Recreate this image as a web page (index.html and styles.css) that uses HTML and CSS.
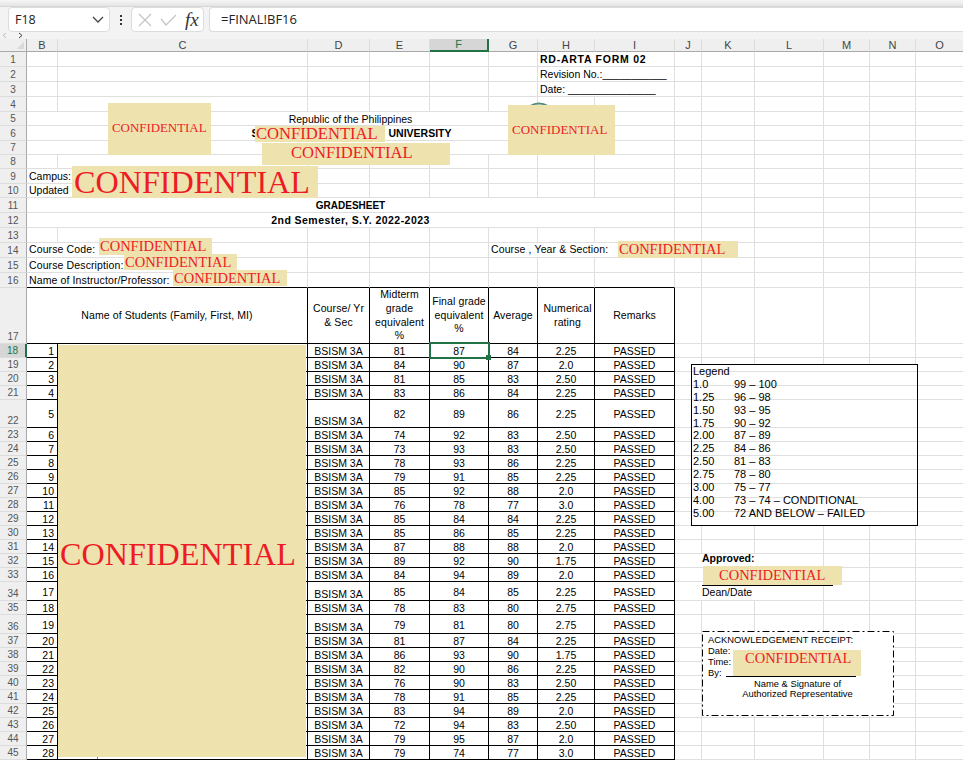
FILE: index.html
```html
<!DOCTYPE html>
<html lang="en">
<head>
    <meta charset="UTF-8">
    <meta name="viewport" content="width=device-width, initial-scale=1.0">
    <title>Gradesheet</title>
    <link rel="stylesheet" href="styles.css">
</head>
<body>
    <div class="toolbar">
        <div class="top-strip"></div>
        <div class="formula-bar">
            <div class="name-box">
                <span>F18</span>
                <svg width="12" height="7" viewBox="0 0 12 7"><path d="M1 1l5 5 5-5" fill="none" stroke="#444" stroke-width="1.3"/></svg>
            </div>
            <div class="bar-dots"><i></i><i></i><i></i></div>
            <div class="fx-box">
                <svg width="14" height="14" viewBox="0 0 14 14"><path d="M1 1l12 12M13 1L1 13" fill="none" stroke="#c4c4c4" stroke-width="1.2"/></svg>
                <svg width="17" height="12" viewBox="0 0 17 12"><path d="M1 5l5 6L16 1" fill="none" stroke="#c4c4c4" stroke-width="1.2"/></svg>
                <span class="fx">fx</span>
            </div>
            <div class="formula-input">=FINAL!BF16</div>
        </div>
        <div class="scroll-arrows">
            <svg width="24" height="7" viewBox="0 0 24 7"><path d="M6 1L3 3.5 6 6" fill="none" stroke="#bbb"/><path d="M19 1l3 2.500L19 6" fill="none" stroke="#444"/></svg>
        </div>
    </div>

    <div class="sheet">
        <table class="grid">
            <colgroup>
                <col class="c-head"><col class="c-b"><col class="c-c"><col class="c-d"><col class="c-e"><col class="c-f"><col class="c-g"><col class="c-h"><col class="c-i"><col class="c-j"><col class="c-k"><col class="c-l"><col class="c-m"><col class="c-n"><col class="c-o">
            </colgroup>
            <tr class="h13 col-heads"><th class="corner"></th><th>B</th><th>C</th><th>D</th><th>E</th><th class="active">F</th><th>G</th><th>H</th><th>I</th><th>J</th><th>K</th><th>L</th><th>M</th><th>N</th><th>O</th></tr>

            <tr class="h15"><th>1</th><td></td><td></td><td></td><td></td><td></td><td></td><td colspan="2" class="form-no">RD-ARTA FORM 02</td><td></td><td></td><td></td><td></td><td></td><td></td></tr>
            <tr class="h15"><th>2</th><td></td><td></td><td></td><td></td><td></td><td></td><td colspan="2">Revision No.:___________</td><td></td><td></td><td></td><td></td><td></td><td></td></tr>
            <tr class="h15"><th>3</th><td></td><td></td><td></td><td></td><td></td><td></td><td colspan="2">Date: _______________</td><td></td><td></td><td></td><td></td><td></td><td></td></tr>
            <tr class="h15"><th>4</th><td></td><td></td><td></td><td></td><td></td><td></td><td></td><td></td><td></td><td></td><td></td><td></td><td></td><td></td></tr>
            <tr class="h14"><th>5</th><td colspan="8" class="center republic">Republic of the Philippines</td><td></td><td></td><td></td><td></td><td></td><td></td></tr>
            <tr class="h15"><th>6</th><td colspan="8" class="center bold school">S<span class="school-gap"></span>UNIVERSITY</td><td></td><td></td><td></td><td></td><td></td><td></td></tr>
            <tr class="h14"><th>7</th><td colspan="8"></td><td></td><td></td><td></td><td></td><td></td><td></td></tr>
            <tr class="h14"><th>8</th><td></td><td></td><td></td><td></td><td></td><td></td><td></td><td></td><td></td><td></td><td></td><td></td><td></td><td></td></tr>
            <tr class="h15"><th>9</th><td colspan="2">Campus:</td><td></td><td></td><td></td><td></td><td></td><td></td><td></td><td></td><td></td><td></td><td></td><td></td></tr>
            <tr class="h14"><th>10</th><td colspan="2">Updated</td><td></td><td></td><td></td><td></td><td></td><td></td><td></td><td></td><td></td><td></td><td></td><td></td></tr>
            <tr class="h15"><th>11</th><td colspan="8" class="center bold sheet-title">GRADESHEET</td><td></td><td></td><td></td><td></td><td></td><td></td></tr>
            <tr class="h15"><th>12</th><td colspan="8" class="center bold term">2nd Semester, S.Y. 2022-2023</td><td></td><td></td><td></td><td></td><td></td><td></td></tr>
            <tr class="h15"><th>13</th><td></td><td></td><td></td><td></td><td></td><td></td><td></td><td></td><td></td><td></td><td></td><td></td><td></td><td></td></tr>
            <tr class="h15 info info-top"><th>14</th><td colspan="2">Course Code:</td><td></td><td></td><td></td><td colspan="3">Course , Year &amp; Section:</td><td></td><td></td><td></td><td></td><td></td><td></td></tr>
            <tr class="h15 info"><th>15</th><td colspan="2">Course Description:</td><td></td><td></td><td></td><td></td><td></td><td></td><td></td><td></td><td></td><td></td><td></td><td></td></tr>
            <tr class="h15 info above-roster"><th>16</th><td colspan="2">Name of Instructor/Professor:</td><td></td><td></td><td></td><td></td><td></td><td></td><td></td><td></td><td></td><td></td><td></td><td></td></tr>

            <tr class="h56 roster-head"><th>17</th><td colspan="2">Name of Students (Family, First, MI)</td><td>Course/ Yr<br>&amp; Sec</td><td>Midterm<br>grade<br>equivalent<br>%</td><td>Final grade<br>equivalent<br>%</td><td>Average</td><td class="head-rating">Numerical<br>rating</td><td>Remarks</td><td></td><td></td><td></td><td></td><td></td><td></td></tr>

            <tr class="h14 roster"><th class="active">18</th><td>1</td><td></td><td>BSISM 3A</td><td>81</td><td class="selected">87</td><td>84</td><td>2.25</td><td>PASSED</td><td></td><td></td><td></td><td></td><td></td><td></td></tr>
            <tr class="h14 roster"><th>19</th><td>2</td><td></td><td>BSISM 3A</td><td>84</td><td>90</td><td>87</td><td>2.0</td><td>PASSED</td><td></td><td></td><td></td><td></td><td></td><td></td></tr>
            <tr class="h14 roster"><th>20</th><td>3</td><td></td><td>BSISM 3A</td><td>81</td><td>85</td><td>83</td><td>2.50</td><td>PASSED</td><td colspan="6"></td></tr>
            <tr class="h14 roster"><th>21</th><td>4</td><td></td><td>BSISM 3A</td><td>83</td><td>86</td><td>84</td><td>2.25</td><td>PASSED</td><td colspan="6"></td></tr>
            <tr class="h28 roster"><th>22</th><td>5</td><td></td><td>BSISM 3A</td><td>82</td><td>89</td><td>86</td><td>2.25</td><td>PASSED</td><td colspan="6"></td></tr>
            <tr class="h14 roster"><th>23</th><td>6</td><td></td><td>BSISM 3A</td><td>74</td><td>92</td><td>83</td><td>2.50</td><td>PASSED</td><td colspan="6"></td></tr>
            <tr class="h14 roster"><th>24</th><td>7</td><td></td><td>BSISM 3A</td><td>73</td><td>93</td><td>83</td><td>2.50</td><td>PASSED</td><td colspan="6"></td></tr>
            <tr class="h14 roster"><th>25</th><td>8</td><td></td><td>BSISM 3A</td><td>78</td><td>93</td><td>86</td><td>2.25</td><td>PASSED</td><td colspan="6"></td></tr>
            <tr class="h14 roster"><th>26</th><td>9</td><td></td><td>BSISM 3A</td><td>79</td><td>91</td><td>85</td><td>2.25</td><td>PASSED</td><td colspan="6"></td></tr>
            <tr class="h14 roster"><th>27</th><td>10</td><td></td><td>BSISM 3A</td><td>85</td><td>92</td><td>88</td><td>2.0</td><td>PASSED</td><td colspan="6"></td></tr>
            <tr class="h14 roster"><th>28</th><td>11</td><td></td><td>BSISM 3A</td><td>76</td><td>78</td><td>77</td><td>3.0</td><td>PASSED</td><td colspan="6"></td></tr>
            <tr class="h14 roster"><th>29</th><td>12</td><td></td><td>BSISM 3A</td><td>85</td><td>84</td><td>84</td><td>2.25</td><td>PASSED</td><td colspan="6"></td></tr>
            <tr class="h14 roster"><th>30</th><td>13</td><td></td><td>BSISM 3A</td><td>85</td><td>86</td><td>85</td><td>2.25</td><td>PASSED</td><td></td><td></td><td></td><td></td><td></td><td></td></tr>
            <tr class="h14 roster"><th>31</th><td>14</td><td></td><td>BSISM 3A</td><td>87</td><td>88</td><td>88</td><td>2.0</td><td>PASSED</td><td></td><td></td><td></td><td></td><td></td><td></td></tr>
            <tr class="h14 roster"><th>32</th><td>15</td><td></td><td>BSISM 3A</td><td>89</td><td>92</td><td>90</td><td>1.75</td><td>PASSED</td><td colspan="3" class="approved">Approved:</td><td></td><td></td><td></td></tr>
            <tr class="h14 roster"><th>33</th><td>16</td><td></td><td>BSISM 3A</td><td>84</td><td>94</td><td>89</td><td>2.0</td><td>PASSED</td><td colspan="3"></td><td></td><td></td><td></td></tr>
            <tr class="h19 roster"><th>34</th><td>17</td><td></td><td>BSISM 3A</td><td>85</td><td>84</td><td>85</td><td>2.25</td><td>PASSED</td><td colspan="3" class="dean">Dean/Date</td><td></td><td></td><td></td></tr>
            <tr class="h14 roster"><th>35</th><td>18</td><td></td><td>BSISM 3A</td><td>78</td><td>83</td><td>80</td><td>2.75</td><td>PASSED</td><td></td><td></td><td></td><td></td><td></td><td></td></tr>
            <tr class="h19 roster"><th>36</th><td>19</td><td></td><td>BSISM 3A</td><td>79</td><td>81</td><td>80</td><td>2.75</td><td>PASSED</td><td></td><td></td><td></td><td></td><td></td><td></td></tr>
            <tr class="h14 roster"><th>37</th><td>20</td><td></td><td>BSISM 3A</td><td>81</td><td>87</td><td>84</td><td>2.25</td><td>PASSED</td><td></td><td></td><td></td><td></td><td></td><td></td></tr>
            <tr class="h14 roster"><th>38</th><td>21</td><td></td><td>BSISM 3A</td><td>86</td><td>93</td><td>90</td><td>1.75</td><td>PASSED</td><td></td><td></td><td></td><td></td><td></td><td></td></tr>
            <tr class="h14 roster"><th>39</th><td>22</td><td></td><td>BSISM 3A</td><td>82</td><td>90</td><td>86</td><td>2.25</td><td>PASSED</td><td></td><td></td><td></td><td></td><td></td><td></td></tr>
            <tr class="h14 roster"><th>40</th><td>23</td><td></td><td>BSISM 3A</td><td>76</td><td>90</td><td>83</td><td>2.50</td><td>PASSED</td><td></td><td></td><td></td><td></td><td></td><td></td></tr>
            <tr class="h14 roster"><th>41</th><td>24</td><td></td><td>BSISM 3A</td><td>78</td><td>91</td><td>85</td><td>2.25</td><td>PASSED</td><td></td><td></td><td></td><td></td><td></td><td></td></tr>
            <tr class="h14 roster"><th>42</th><td>25</td><td></td><td>BSISM 3A</td><td>83</td><td>94</td><td>89</td><td>2.0</td><td>PASSED</td><td></td><td></td><td></td><td></td><td></td><td></td></tr>
            <tr class="h14 roster"><th>43</th><td>26</td><td></td><td>BSISM 3A</td><td>72</td><td>94</td><td>83</td><td>2.50</td><td>PASSED</td><td></td><td></td><td></td><td></td><td></td><td></td></tr>
            <tr class="h14 roster"><th>44</th><td>27</td><td></td><td>BSISM 3A</td><td>79</td><td>95</td><td>87</td><td>2.0</td><td>PASSED</td><td></td><td></td><td></td><td></td><td></td><td></td></tr>
            <tr class="h14 roster"><th>45</th><td>28</td><td></td><td>BSISM 3A</td><td>79</td><td>74</td><td>77</td><td>3.0</td><td>PASSED</td><td></td><td></td><td></td><td></td><td></td><td></td></tr>
        </table>

        <!-- things floating over the cells -->
        <svg class="logo-peek" width="20" height="4" viewBox="0 0 20 4"><path d="M1 4Q10 -1 19 4" fill="none" stroke="#4f8a7a" stroke-width="2"/></svg>

        <div class="mask mask-logo-left">CONFIDENTIAL</div>
        <div class="mask mask-logo-right">CONFIDENTIAL</div>
        <div class="mask mask-school">CONFIDENTIAL</div>
        <div class="mask mask-address">CONFIDENTIAL</div>
        <div class="mask mask-campus">CONFIDENTIAL</div>
        <div class="mask mask-code">CONFIDENTIAL</div>
        <div class="mask mask-desc">CONFIDENTIAL</div>
        <div class="mask mask-prof">CONFIDENTIAL</div>
        <div class="mask mask-section">CONFIDENTIAL</div>
        <div class="mask mask-names">CONFIDENTIAL</div>

        <div class="legend">
            <div class="legend-title">Legend</div>
            <span>1.0</span><span>99 – 100</span>
            <span>1.25</span><span>96 – 98</span>
            <span>1.50</span><span>93 – 95</span>
            <span>1.75</span><span>90 – 92</span>
            <span>2.00</span><span>87 – 89</span>
            <span>2.25</span><span>84 – 86</span>
            <span>2.50</span><span>81 – 83</span>
            <span>2.75</span><span>78 – 80</span>
            <span>3.00</span><span>75 – 77</span>
            <span>4.00</span><span>73 – 74 – CONDITIONAL</span>
            <span>5.00</span><span>72 AND BELOW – FAILED</span>
        </div>

        <div class="sign-line"></div>
        <div class="mask mask-dean">CONFIDENTIAL</div>

        <div class="receipt">
            <svg class="receipt-border" width="192" height="85"><rect x="0.5" y="0.5" width="191" height="84" fill="none" stroke="#000" stroke-dasharray="7 3 2 3"/></svg>
            <div class="receipt-head">ACKNOWLEDGEMENT RECEIPT:</div>
            <div>Date:</div>
            <div class="receipt-time">Time:</div>
            <div class="receipt-by">By: <span class="receipt-line"></span></div>
            <div class="receipt-name">Name &amp; Signature of<br>Authorized Representative</div>
            <div class="mask mask-receipt">CONFIDENTIAL</div>
        </div>
    </div>
</body>
</html>
```

FILE: styles.css
```css
* {
    box-sizing: border-box;
}
html, body {
    margin: 0;
    height: 760px;
    overflow: hidden;
    background: #fff;
}
body {
    font-family: "Liberation Sans", Arial, sans-serif;
    font-size: 10.5px;
    color: #000;
}

/* toolbar */
.toolbar {
    height: 39px;
    background: #f3f3f3;
}
.top-strip {
    height: 7px;
    background: linear-gradient(#f6f6f6, #e4e4e4);
    border-bottom: 1px solid #d6d6d6;
}
.formula-bar {
    display: flex;
    align-items: stretch;
    height: 25px;
    padding-left: 8px;
}
.name-box {
    width: 102px;
    background: #fff;
    border: 1px solid #dcdcdc;
    border-radius: 4px;
    display: flex;
    align-items: center;
    justify-content: space-between;
    padding: 0 5px 0 6px;
    font: 12.5px "Open Sans", sans-serif;
    color: #222;
}
.bar-dots {
    width: 21px;
    display: flex;
    flex-direction: column;
    align-items: center;
    justify-content: center;
    gap: 2px;
}
.bar-dots i {
    width: 2px;
    height: 2px;
    background: #333;
}
.fx-box {
    width: 73px;
    background: #fff;
    border: 1px solid #dcdcdc;
    border-radius: 4px;
    display: flex;
    align-items: center;
    gap: 8px;
    padding-left: 6px;
}
.fx {
    font: italic 19px "Liberation Serif", serif;
    color: #333;
    line-height: 20px;
}
.formula-input {
    flex: 1;
    margin-left: 5px;
    background: #fff;
    border: 1px solid #dcdcdc;
    border-right: none;
    border-radius: 4px 0 0 4px;
    padding-left: 11px;
    font: 13px/23px "Open Sans", sans-serif;
    color: #222;
}
.scroll-arrows {
    height: 7px;
}
.scroll-arrows svg {
    display: block;
}

/* sheet */
.sheet {
    position: relative;
    height: 721px;
    overflow: hidden;
}
.grid {
    table-layout: fixed;
    width: 964px;
    border-collapse: separate;
    border-spacing: 0;
}
.c-head { width: 27px; }
.c-b { width: 31px; }
.c-c { width: 250px; }
.c-d { width: 62px; }
.c-e { width: 60px; }
.c-f { width: 59px; }
.c-g { width: 49px; }
.c-h { width: 57px; }
.c-i { width: 80px; }
.c-j { width: 27px; }
.c-k { width: 53px; }
.c-l { width: 69px; }
.c-m { width: 46px; }
.c-n { width: 46px; }
.c-o { width: 48px; }

.h13 > * { height: 13px; }
.h14 > * { height: 14px; }
.h15 > * { height: 15px; }
.h19 > * { height: 19px; }
.h28 > * { height: 28px; }
.h56 > * { height: 56px; }

.grid td {
    padding: 0 2px;
    border-right: 1px solid #dfdfdf;
    border-bottom: 1px solid #dfdfdf;
    line-height: 13px;
    white-space: nowrap;
    overflow: visible;
    vertical-align: middle;
}
.grid th {
    padding: 0;
    background: #efefef;
    border-right: 1px solid #a9a9a9;
    border-bottom: 1px solid #dcdcdc;
    font-size: 10px;
    font-weight: normal;
    line-height: 13px;
    color: #555;
    text-align: center;
    vertical-align: bottom;
}
.grid .col-heads th {
    border-right: 1px solid #dcdcdc;
    border-bottom: 1px solid #a9a9a9;
    font-size: 11px;
    line-height: 11px;
    color: #444;
    vertical-align: middle;
}
.grid .col-heads th.corner {
    border-right: 1px solid #a9a9a9;
    background: #efefef linear-gradient(135deg, transparent 50%, #dadada 50%) no-repeat right 2px bottom 2px / 7px 7px;
}
.grid .col-heads th.active {
    background: #d6d6d6;
    border-bottom: 2px solid #217346;
    color: #217346;
}
.grid th.active {
    background: #d6d6d6;
    border-right: 2px solid #217346;
    color: #217346;
}

.center {
    text-align: center;
}
.bold {
    font-weight: bold;
}
.grid .republic {
    padding-top: 1px;
    line-height: 12px;
}
.grid .school {
    padding-left: 4px;
}
.school-gap {
    display: inline-block;
    width: 130px;
}
.sheet-title {
    font-size: 10px;
}
.term {
    letter-spacing: 0.45px;
}
.form-no {
    font-weight: bold;
    letter-spacing: 0.75px;
}
.info {
    letter-spacing: 0.12px;
}
.info-top td {
    vertical-align: top;
}

/* student table */
.above-roster td:nth-child(n+2):nth-child(-n+8) {
    border-bottom-color: #000;
}
.roster-head td {
    line-height: 13.75px;
    padding: 0;
    text-align: center;
    letter-spacing: 0.1px;
}
.roster-head td:nth-child(-n+8) {
    border-right-color: #000;
    border-bottom-color: #000;
}
.grid .head-rating {
    padding-left: 3px;
}
.roster td:nth-child(-n+9) {
    border-right-color: #000;
    border-bottom-color: #000;
    text-align: center;
}
.roster td, .grid .roster th {
    line-height: 12px;
    padding-top: 1px;
}
.roster td:nth-child(2) {
    text-align: right;
    padding-right: 3px;
}
.roster td:nth-child(4) {
    vertical-align: bottom;
}
.selected {
    position: relative;
}
.selected::after {
    content: "";
    position: absolute;
    left: -1px;
    top: -2px;
    width: 61px;
    height: 17px;
    box-sizing: border-box;
    border: 2px solid #217346;
}
.selected::before {
    content: "";
    position: absolute;
    left: 56px;
    top: 11px;
    width: 5px;
    height: 5px;
    background: #217346;
    z-index: 1;
}

/* redaction boxes */
.mask {
    position: absolute;
    display: flex;
    align-items: center;
    background: #eee2af;
    color: #ed1c24;
    font-family: "Liberation Serif", serif;
    font-size: 14.5px;
    line-height: 1;
    white-space: nowrap;
}
.mask-logo-left { left: 108px; top: 64px; width: 103px; height: 52px; padding: 0 0 2px 4px; font-size: 12.9px; }
.mask-logo-right { left: 508px; top: 66px; width: 107px; height: 50px; padding: 0 0 2px 4px; font-size: 13px; }
.mask-school { left: 255px; top: 87px; width: 130px; height: 16px; padding-left: 1px; font-size: 16.6px; }
.mask-address { left: 262px; top: 104px; width: 188px; height: 22px; padding: 0 0 1px 29px; font-size: 16.6px; }
.mask-campus { left: 72px; top: 127px; width: 246px; height: 32px; padding-left: 2px; font-size: 32.2px; }
.mask-code { left: 99px; top: 199px; width: 113px; height: 17px; padding-left: 1px; }
.mask-desc { left: 124px; top: 215px; width: 113px; height: 16px; padding-left: 1px; }
.mask-prof { left: 173px; top: 231px; width: 114px; height: 16px; padding-left: 1px; }
.mask-section { left: 618px; top: 202px; width: 120px; height: 17px; padding-left: 1px; }
.mask-names { left: 58px; top: 306px; width: 248px; height: 412px; padding: 6px 0 0 2px; font-size: 32.2px; }
.mask-names::after {
    content: "";
    position: absolute;
    left: 39px;
    top: 412px;
    width: 1px;
    height: 2px;
    background: #888;
}
.mask-dean { left: 703px; top: 527px; width: 139px; height: 19px; padding-left: 16px; }
.mask-receipt { left: 31px; top: 19px; width: 128px; height: 26px; padding: 0 0 9px 12px; }

.logo-peek {
    position: absolute;
    left: 529px;
    top: 63px;
}

/* legend */
.legend {
    position: absolute;
    left: 691px;
    top: 325px;
    width: 227px;
    height: 162px;
    border: 1px solid #000;
    /* covers the cell lines of row 19 */
    background: linear-gradient(#fff 6px, transparent 6px);
    padding: 0 0 0 1px;
    display: grid;
    grid-template-columns: 41px 1fr;
    grid-auto-rows: 12.9px;
    font-size: 11px;
    line-height: 12.9px;
}
.legend-title {
    grid-column: 1 / 3;
}

/* approval */
.grid .approved {
    font-weight: bold;
    padding: 0 0 0 27px;
    text-align: left;
    vertical-align: top;
    line-height: 9px;
}
.grid .dean {
    padding-left: 27px;
    text-align: left;
}
.sign-line {
    position: absolute;
    left: 702px;
    top: 546px;
    width: 131px;
    height: 1px;
    background: #000;
    z-index: 1;
}

/* receipt */
.receipt {
    position: absolute;
    left: 702px;
    top: 592px;
    width: 192px;
    height: 85px;
    background: #fff;
    padding: 3px 0 0 6px;
    font-size: 9.4px;
    line-height: 11px;
}
.receipt-border {
    position: absolute;
    left: 0;
    top: 0;
}
.receipt-head {
    height: 10px;
    margin-top: 1px;
    line-height: 10px;
}
.receipt-by {
    display: flex;
    gap: 3px;
}
.receipt-line {
    width: 130px;
    height: 10px;
    margin-left: 1px;
    border-bottom: 1px solid #000;
    position: relative;
    z-index: 1;
}
.receipt-name {
    text-align: center;
    width: 179px;
    margin-top: 1px;
    line-height: 10px;
}
```
